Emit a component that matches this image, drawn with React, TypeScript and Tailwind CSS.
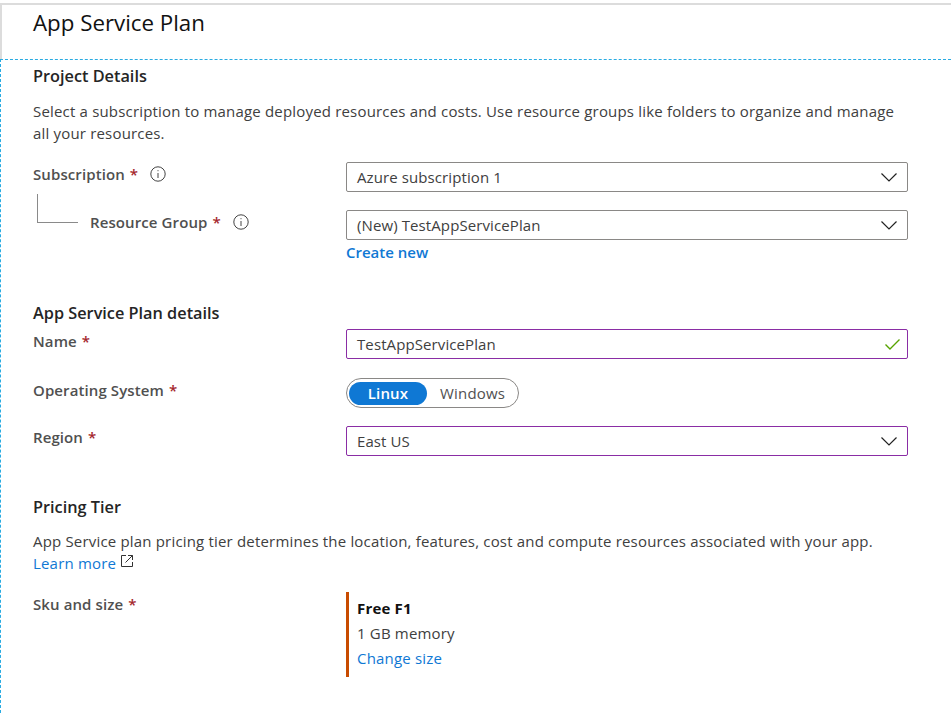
import React from 'react';

const font = "font-['Open_Sans','Noto_Sans',sans-serif]";

const InfoIcon = () => (
  <svg width="16" height="16" viewBox="0 0 16 16" fill="none" stroke="#444" className="ml-[12px]">
    <circle cx="8" cy="8" r="7.2" />
    <path d="M8 7v5" />
    <path d="M8 4.2v1" />
  </svg>
);

const Chevron = () => (
  <svg width="16" height="9" viewBox="0 0 16 9" fill="none" stroke="#222" strokeWidth="1.2">
    <path d="M.5.5 8 8 15.5.5" />
  </svg>
);

const CheckIcon = () => (
  <svg width="15" height="11" viewBox="0 0 15 11" fill="none" stroke="#57a300" strokeWidth="1.4">
    <path d="M.5 5.5 5 10 14.5.5" />
  </svg>
);

const LinkOut = () => (
  <svg width="12" height="12" viewBox="0 0 12 12" fill="none" stroke="#333" className="ml-[5px] -mt-[4px]">
    <path d="M5 .5H.5v11h11V7" />
    <path d="M4.5 7.5l7-7M7 .5h4.5V5" />
  </svg>
);

const Label: React.FC<{ text: string; info?: boolean }> = ({ text, info }) => (
  <div className="flex items-center font-semibold tracking-[0.1px] text-[#505050]">
    <span>{text}</span>
    <span className="ml-[5px] text-[#a4262c]">*</span>
    {info && <InfoIcon />}
  </div>
);

const Select: React.FC<{ value: string; focused?: boolean }> = ({ value, focused }) => (
  <div
    className={`flex h-[30px] w-[562px] items-center justify-between rounded-[2px] border pr-[10px] pl-[10px] tracking-[0.1px] text-[#404040] ${
      focused ? 'border-[#8a2da5]' : 'border-[#8a8886]'
    }`}
  >
    <span>{value}</span>
    <Chevron />
  </div>
);

const SectionTitle: React.FC<{ text: string }> = ({ text }) => (
  <h2 className="text-[16.3px] leading-[22px] font-semibold tracking-normal text-[#252525]">{text}</h2>
);

const App: React.FC = () => {
  return (
    <div className={`${font} h-[713px] w-[951px] overflow-hidden bg-white pt-[3px] text-[15px] leading-[22px] tracking-[0.18px]`}>
      <div className="h-[56px] border-t-2 border-l-2 border-[#dcdcdc] pl-[31px]">
        <h1 className="pt-[3px] text-[22.3px] leading-[30px] font-normal tracking-normal text-[#111]">App Service Plan</h1>
      </div>

      <main className="h-[654px] border-t border-l border-dashed border-[#29abe2] pt-[5px] pr-[43px] pl-[32px]">
        <SectionTitle text="Project Details" />
        <p className="mt-[13px] text-[#404040]">
          Select a subscription to manage deployed resources and costs. Use resource groups like folders to organize
          and manage all your resources.
        </p>

        <div className="mt-[18px] flex items-start justify-between">
          <div className="pt-[1px]">
            <Label text="Subscription" info />
          </div>
          <Select value="Azure subscription 1" />
        </div>

        <div className="mt-[18px] flex items-start justify-between">
          <div className="flex">
            <div className="-mt-[16px] ml-[4px] h-[29px] w-[41px] border-b border-l border-[#8a8a8a]" />
            <div className="ml-[12px] pt-[1px]">
              <Label text="Resource Group" info />
            </div>
          </div>
          <Select value="(New) TestAppServicePlan" />
        </div>
        <div className="ml-[313px] pt-[1px] font-semibold tracking-normal text-[#0f78d4]">Create new</div>

        <div className="mt-[39px]">
          <SectionTitle text="App Service Plan details" />
        </div>

        <div className="mt-[5px] flex items-start justify-between">
          <div className="pt-[1px]">
            <Label text="Name" />
          </div>
          <div className="flex h-[30px] w-[562px] items-center justify-between rounded-[2px] border border-[#8a2da5] pr-[7px] pl-[10px] tracking-[0.1px] text-[#404040]">
            <span>TestAppServicePlan</span>
            <CheckIcon />
          </div>
        </div>

        <div className="mt-[19px] flex items-start justify-between">
          <div className="pt-[1px]">
            <Label text="Operating System" />
          </div>
          <div className="w-[562px]">
            <div className="flex h-[30px] w-[173px] items-center rounded-full border border-[#8a8886] pl-[2px]">
              <div className="flex h-[23px] w-[78px] items-center justify-center rounded-full bg-[#0f78d4] font-semibold text-white">
                Linux
              </div>
              <span className="ml-[13px] text-[#505050]">Windows</span>
            </div>
          </div>
        </div>

        <div className="mt-[18px] flex items-start justify-between">
          <Label text="Region" />
          <Select value="East US" focused />
        </div>

        <div className="mt-[40px]">
          <SectionTitle text="Pricing Tier" />
        </div>
        <p className="mt-[12px] text-[#404040]">
          App Service plan pricing tier determines the location, features, cost and compute resources associated with
          your app.
        </p>
        <div className="flex items-center text-[#0f78d4]">
          Learn more
          <LinkOut />
        </div>

        <div className="mt-[18px] flex items-start justify-between">
          <div className="pt-[1px]">
            <Label text="Sku and size" />
          </div>
          <div className="h-[85px] w-[562px] border-l-[3px] border-[#c84b00] pt-[5px] pl-[8px]">
            <div className="font-bold text-[#111]">Free F1</div>
            <div className="mt-[3px] text-[#404040]">1 GB memory</div>
            <div className="mt-[3px] text-[#0f78d4]">Change size</div>
          </div>
        </div>
      </main>
    </div>
  );
};

export default App;
